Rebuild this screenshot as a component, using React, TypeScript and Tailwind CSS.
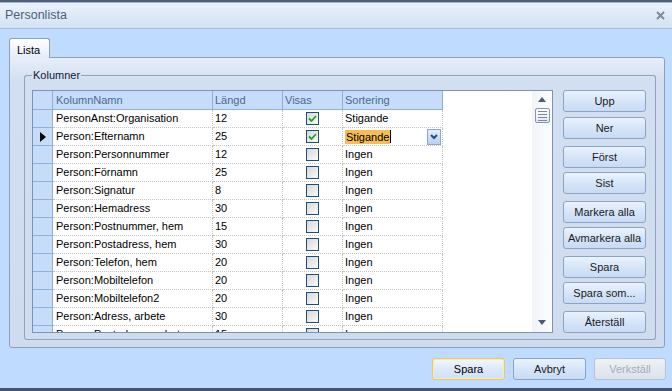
import React from 'react';

type Row = { name: string; len: string; show: boolean; sort: string };

const rows: Row[] = [
  { name: 'PersonAnst:Organisation', len: '12', show: true, sort: 'Stigande' },
  { name: 'Person:Efternamn', len: '25', show: true, sort: 'Stigande' },
  { name: 'Person:Personnummer', len: '12', show: false, sort: 'Ingen' },
  { name: 'Person:Förnamn', len: '25', show: false, sort: 'Ingen' },
  { name: 'Person:Signatur', len: '8', show: false, sort: 'Ingen' },
  { name: 'Person:Hemadress', len: '30', show: false, sort: 'Ingen' },
  { name: 'Person:Postnummer, hem', len: '15', show: false, sort: 'Ingen' },
  { name: 'Person:Postadress, hem', len: '30', show: false, sort: 'Ingen' },
  { name: 'Person:Telefon, hem', len: '20', show: false, sort: 'Ingen' },
  { name: 'Person:Mobiltelefon', len: '20', show: false, sort: 'Ingen' },
  { name: 'Person:Mobiltelefon2', len: '20', show: false, sort: 'Ingen' },
  { name: 'Person:Adress, arbete', len: '30', show: false, sort: 'Ingen' },
  { name: 'Person:Postadress, arbete', len: '15', show: false, sort: 'Ingen' },
];

const sideButtons = [
  { label: 'Upp', mt: 'mt-0' },
  { label: 'Ner', mt: 'mt-[5px]' },
  { label: 'Först', mt: 'mt-[7px]' },
  { label: 'Sist', mt: 'mt-[4px]' },
  { label: 'Markera alla', mt: 'mt-[7px]' },
  { label: 'Avmarkera alla', mt: 'mt-[4px]' },
  { label: 'Spara', mt: 'mt-[7px]' },
  { label: 'Spara som...', mt: 'mt-[4px]' },
  { label: 'Återställ', mt: 'mt-[7px]' },
];

const btn =
  'h-[22px] rounded-[3px] border border-[#8ba4c6] bg-linear-to-b from-[#eaf2fd] via-[#d6e5f8] to-[#c8dbf4] text-[11px] text-[#1a1a1a] flex items-center justify-center';

function CheckBox({ checked }: { checked: boolean }) {
  return (
    <div className="w-[13px] h-[13px] border border-[#1f4e79] bg-linear-to-br from-[#d6d6d6] to-[#fbfbfb] flex items-center justify-center">
      {checked && (
        <svg width="9" height="9" viewBox="0 0 9 9">
          <polyline points="1,4.5 3.5,7 8,2" fill="none" stroke="#21a121" strokeWidth="1.8" />
        </svg>
      )}
    </div>
  );
}

function GridRow({ row, index }: { row: Row; index: number }) {
  const current = index === 1;
  return (
    <div className="flex h-[18px] shrink-0">
      <div className="w-[20px] bg-[#c6dcf8] border-r border-b border-[#8fb0d8] flex items-center justify-center">
        {current && (
          <svg width="6" height="10" viewBox="0 0 6 10">
            <polygon points="0,0 6,5 0,10" fill="#000" />
          </svg>
        )}
      </div>
      <div className="w-[160px] border-r border-b border-dotted border-[#c4c4c4] flex items-center pl-[3px] text-[11px] whitespace-nowrap overflow-hidden">
        {row.name}
      </div>
      <div className="w-[70px] border-r border-b border-dotted border-[#c4c4c4] flex items-center pl-[2px] text-[11px]">
        {row.len}
      </div>
      <div className="w-[60px] border-r border-b border-dotted border-[#c4c4c4] flex items-center justify-center">
        <CheckBox checked={row.show} />
      </div>
      <div className="w-[100px] border-r border-b border-dotted border-[#c4c4c4] flex items-center pl-[2px] text-[11px]">
        {current ? (
          <div className="flex flex-1 items-center justify-between h-full">
            <div className="flex items-center">
              <span className="bg-[#f6bd55] leading-[14px] px-px">{row.sort}</span>
              <span className="w-px h-[13px] bg-black" />
            </div>
            <div className="w-[14px] h-[16px] mr-px border border-[#8ea8ca] bg-linear-to-b from-[#e4eefb] to-[#b9d0ee] flex items-center justify-center">
              <svg width="8" height="6" viewBox="0 0 8 6">
                <polyline points="1,1 4,4 7,1" fill="none" stroke="#244b8c" strokeWidth="2" />
              </svg>
            </div>
          </div>
        ) : (
          row.sort
        )}
      </div>
    </div>
  );
}

export default function App() {
  return (
    <div className="w-[672px] h-[391px] flex flex-col bg-[#bfdbff] overflow-hidden font-['Liberation_Sans',Arial,sans-serif] text-black">
      <div className="h-[2px] bg-[#4d5e76]" />
      <div className="h-[1px] bg-[#9fb4cf]" />
      <div className="h-[26px] flex items-center justify-between pl-[5px] pr-[7px] bg-linear-to-b from-[#eaf1fb] to-[#d4e2f4] border-b border-[#a6bbd6]">
        <span className="text-[12.5px] text-[#4d5f76]">Personlista</span>
        <svg width="9" height="9" viewBox="0 0 9 9">
          <path d="M1 1 L8 8 M8 1 L1 8" stroke="#7b8a9c" strokeWidth="2" />
        </svg>
      </div>

      <div className="flex-1 flex flex-col pt-[9px] pl-[9px] pr-[7px]">
        <div className="flex">
          <div className="relative z-10 -mb-px h-[20px] w-[41px] rounded-t-[3px] border border-b-0 border-[#8ba0bc] bg-linear-to-b from-[#ffffff] to-[#e4ecf7] text-[11px] pl-[7px] pt-[3px]">
            Lista
          </div>
        </div>
        <div className="h-[291px] border border-[#8ba0bc] rounded-[3px] rounded-tl-none bg-linear-to-b from-[#e7eef9] via-[#d2dff0] via-[8%] to-[#cfdcee] pt-[11px] pl-[14px] pr-[8px]">
          <div className="flex flex-col">
            <div className="flex h-[12px]">
              <div className="w-[8px] h-[6px] self-end border-t border-l border-[#8ea4c2] rounded-tl-[3px]" />
              <span className="px-px text-[11px] leading-[12px] text-[#10203a]">Kolumner</span>
              <div className="flex-1 h-[6px] self-end border-t border-r border-[#8ea4c2] rounded-tr-[3px]" />
            </div>
            <div className="h-[259px] border border-t-0 border-[#8ea4c2] rounded-b-[3px] flex pl-[7px] pt-[9px]">
              <div className="w-[521px] h-[243px] border border-[#7b93b6] bg-white flex overflow-hidden">
                <div className="flex-1 flex flex-col overflow-hidden">
                  <div className="flex h-[19px] shrink-0 text-[11px] text-[#4a6a90]">
                    <div className="w-[20px] bg-[#c6dcf8] border-r border-b border-[#8fb0d8]" />
                    <div className="w-[160px] bg-[#c6dcf8] border-r border-b border-[#8fb0d8] flex items-center pl-[3px]">KolumnNamn</div>
                    <div className="w-[70px] bg-[#c6dcf8] border-r border-b border-[#8fb0d8] flex items-center pl-[2px]">Längd</div>
                    <div className="w-[60px] bg-[#c6dcf8] border-r border-b border-[#8fb0d8] flex items-center pl-[2px]">Visas</div>
                    <div className="w-[100px] bg-[#c6dcf8] border-r border-b border-[#8fb0d8] flex items-center pl-[2px]">Sortering</div>
                  </div>
                  {rows.map((r, i) => (
                    <GridRow key={r.name} row={r} index={i} />
                  ))}
                </div>
                <div className="w-[20px] bg-linear-to-r from-[#f1f4f8] to-[#fbfcfd] flex flex-col items-center">
                  <div className="h-[17px] flex items-center justify-center">
                    <svg width="8" height="5" viewBox="0 0 8 5">
                      <polygon points="0,5 4,0 8,5" fill="#4c5c78" />
                    </svg>
                  </div>
                  <div className="w-[15px] h-[15px] rounded-[2px] border border-[#8796ad] bg-linear-to-b from-[#ffffff] to-[#e3e8ef] flex flex-col items-center justify-center gap-[2px]">
                    <div className="w-[9px] h-px bg-[#7d8a9e]" />
                    <div className="w-[9px] h-px bg-[#7d8a9e]" />
                    <div className="w-[9px] h-px bg-[#7d8a9e]" />
                    <div className="w-[9px] h-px bg-[#7d8a9e]" />
                  </div>
                  <div className="flex-1" />
                  <div className="h-[17px] flex items-start justify-center pt-[5px]">
                    <svg width="8" height="5" viewBox="0 0 8 5">
                      <polygon points="0,0 8,0 4,5" fill="#4c5c78" />
                    </svg>
                  </div>
                </div>
              </div>
              <div className="ml-[10px] w-[83px] flex flex-col">
                {sideButtons.map((b) => (
                  <div key={b.label} className={`${btn} ${b.mt}`}>
                    {b.label}
                  </div>
                ))}
              </div>
            </div>
          </div>
        </div>

        <div className="flex justify-end gap-[8px] mt-[10px] -mr-px">
          <div className="h-[22px] w-[73px] rounded-[3px] border border-[#e6c86e] bg-linear-to-b from-[#f2f7fe] via-[#dde9f9] to-[#cfe0f6] text-[11px] flex items-center justify-center shadow-[inset_0_0_0_1px_#fbeaa8]">
            Spara
          </div>
          <div className={`${btn} w-[73px]`}>Avbryt</div>
          <div className="h-[22px] w-[72px] rounded-[3px] border border-[#b7c3d2] bg-linear-to-b from-[#eef1f5] to-[#dce2ea] text-[11px] text-[#a3acb8] flex items-center justify-center">
            Verkställ
          </div>
        </div>
      </div>
      <div className="h-[3px] bg-[#44556c]" />
    </div>
  );
}
